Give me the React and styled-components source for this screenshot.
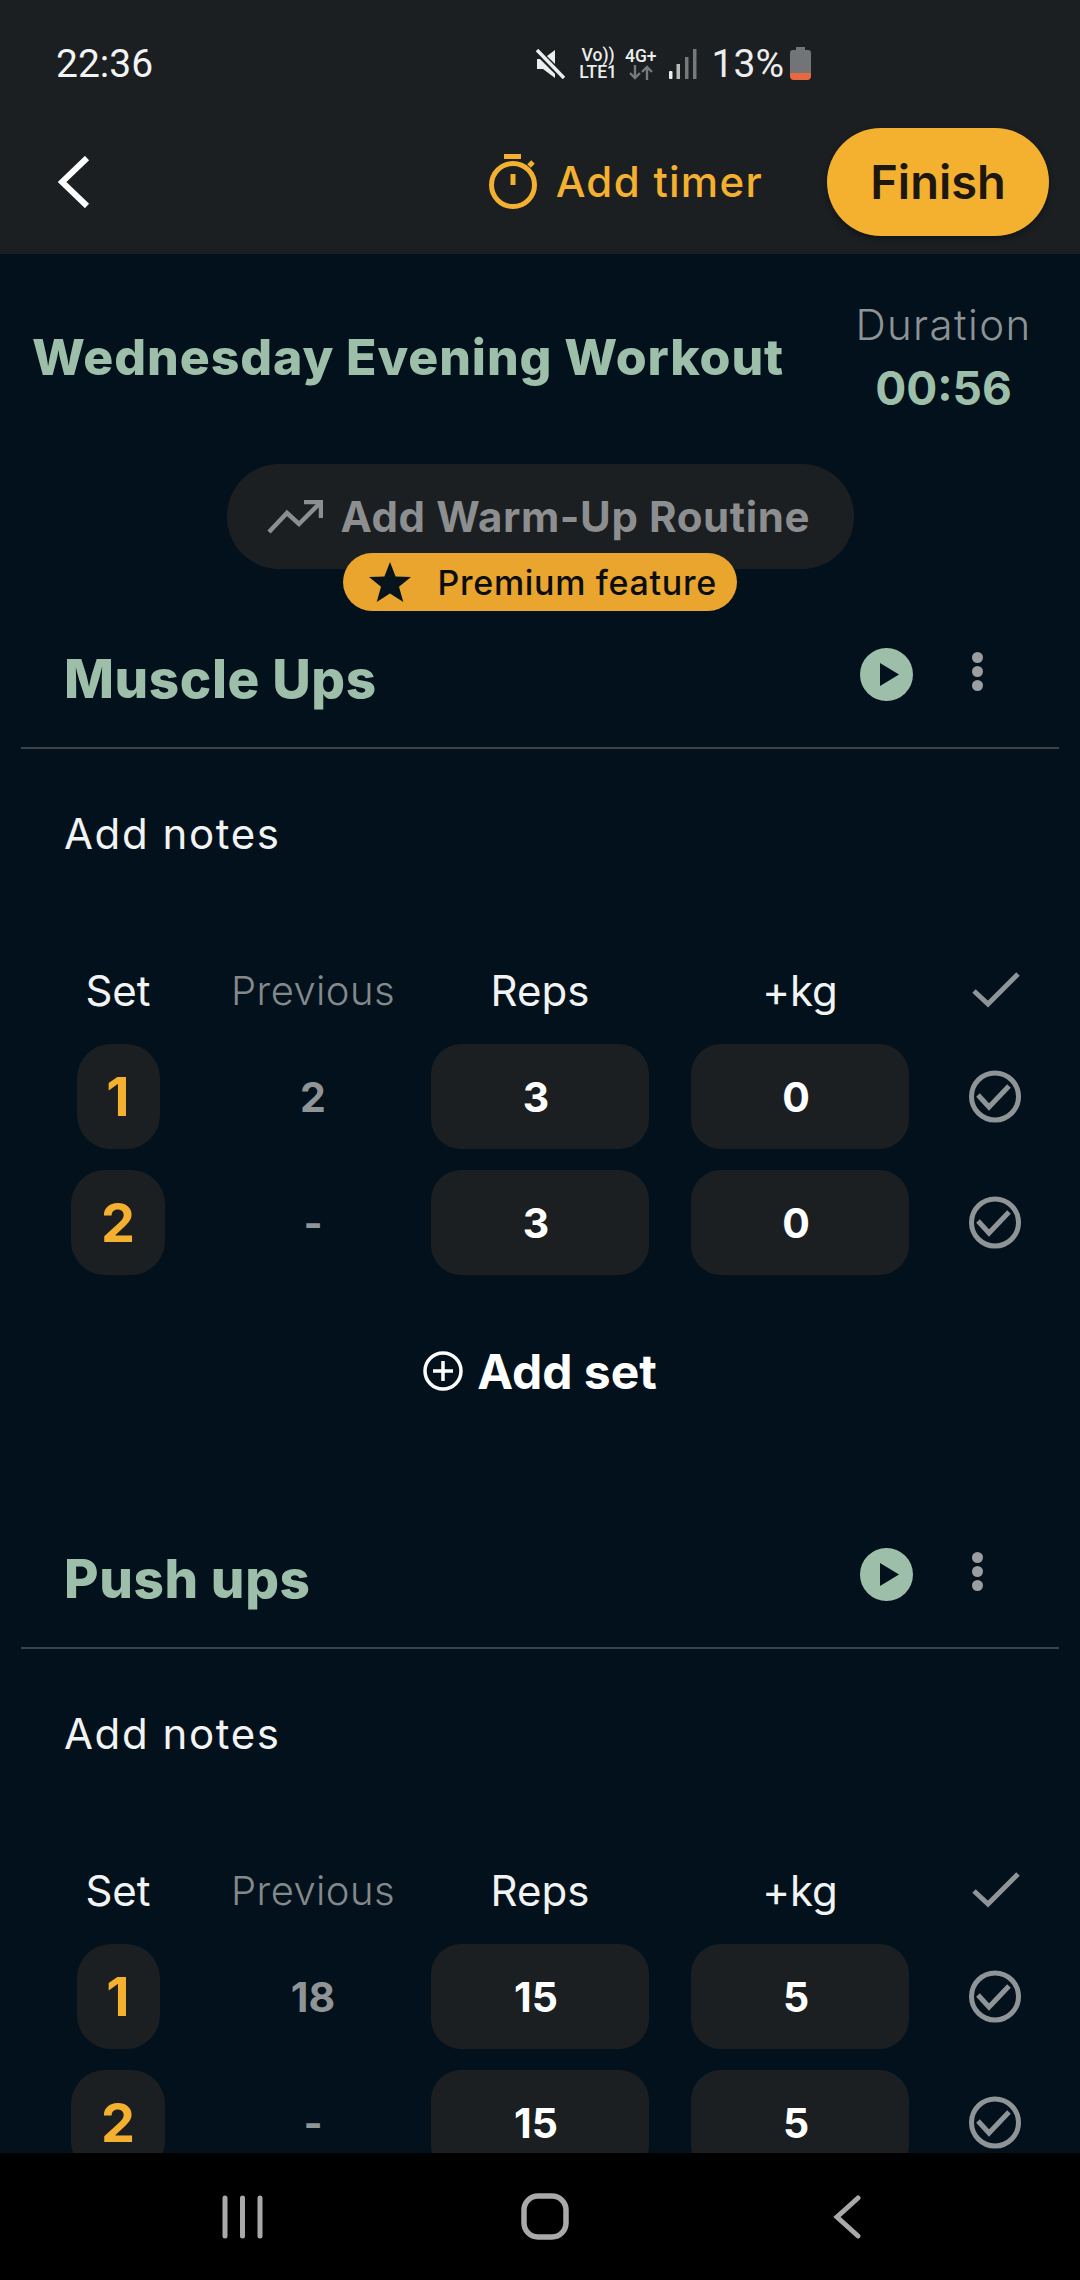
import React from 'react'
import styled, { createGlobalStyle } from 'styled-components'

const GlobalStyle = createGlobalStyle`
  html, body {
    margin: 0;
    padding: 0;
    background: #02111b;
    font-family: Inter, "Noto Sans", sans-serif;
  }
`

const Screen = styled.div`
  width: 1080px;
  height: 2280px;
  display: flex;
  flex-direction: column;
  overflow: hidden;
  background: #02111b;
`

const Header = styled.header`
  height: 254px;
  flex-shrink: 0;
  background: #1b1f21;
  display: flex;
  flex-direction: column;
`

const StatusBar = styled.div`
  height: 127px;
  padding: 0 269px 0 56px;
  display: flex;
  align-items: center;
  justify-content: space-between;
  box-sizing: border-box;
`

const Clock = styled.span`
  font-family: Roboto, sans-serif;
  font-size: 39px;
  color: #f2f3f3;
`

const StatusIcons = styled.div`
  display: flex;
  align-items: center;
`

const NetStack = styled.div`
  display: flex;
  flex-direction: column;
  align-items: center;
  font-family: Roboto, sans-serif;
  font-weight: 500;
  font-size: 17.5px;
  line-height: 17px;
  color: #eceded;
  margin-left: ${p => p.$left}px;
  margin-right: ${p => p.$right}px;
`

const Percent = styled.span`
  font-family: Roboto, sans-serif;
  font-size: 39px;
  color: #eceded;
  margin: 0 6px 0 15px;
`

const Toolbar = styled.div`
  height: 127px;
  margin-top: -9px;
  padding: 0 31px 0 58px;
  display: flex;
  align-items: center;
`

const TimerButton = styled.div`
  margin-left: auto;
  display: flex;
  align-items: center;
  gap: 19px;
  color: #f4b02f;
  font-size: 42px;
  letter-spacing: 1.3px;
  font-weight: 500;
  margin-right: 64px;
`

const FinishButton = styled.div`
  width: 222px;
  height: 108px;
  border-radius: 54px;
  background: #f4b02f;
  color: #1c1710;
  font-size: 47px;
  font-weight: 600;
  display: flex;
  align-items: center;
  justify-content: center;
  box-shadow: 0 3px 6px rgba(0, 0, 0, 0.35);
`

const Main = styled.main`
  flex: 1;
  min-height: 0;
  overflow: hidden;
`

const TitleRow = styled.div`
  padding: 44px 48px 0 32px;
  display: flex;
  align-items: center;
  justify-content: space-between;
`

const WorkoutTitle = styled.h1`
  margin: 0;
  font-size: 50px;
  letter-spacing: 0.9px;
  font-weight: 800;
  white-space: nowrap;
  color: #9dbfa9;
`

const DurationBox = styled.div`
  width: 177px;
  display: flex;
  flex-direction: column;
  align-items: center;
  gap: 9px;
`

const DurationLabel = styled.span`
  font-size: 42px;
  letter-spacing: 1.4px;
  line-height: 54px;
  font-weight: 300;
  color: #8e9396;
`

const DurationValue = styled.span`
  font-size: 46px;
  line-height: 54px;
  font-weight: 700;
  color: #9dbfa9;
`

const WarmUpWrap = styled.div`
  position: relative;
  margin: 49px auto 18px;
  width: 627px;
  height: 147px;
`

const WarmUpPill = styled.div`
  height: 105px;
  border-radius: 52px;
  background: #1b1f21;
  color: #8c8e90;
  font-size: 42px;
  letter-spacing: 0.6px;
  font-weight: 700;
  display: flex;
  align-items: center;
  gap: 18px;
  padding-left: 40px;
  box-sizing: border-box;
`

const PremiumBadge = styled.div`
  position: absolute;
  left: 116px;
  top: 89px;
  width: 394px;
  height: 58px;
  box-sizing: border-box;
  padding-left: 25px;
  border-radius: 29px;
  background: #e9a52d;
  color: #0a0e10;
  font-size: 34px;
  letter-spacing: 0.7px;
  font-weight: 500;
  display: flex;
  align-items: center;
  gap: 26px;
`

const Exercise = styled.section`
  margin-top: ${p => p.$top}px;
`

const ExerciseHead = styled.div`
  height: 100px;
  padding: 0 97px 0 64px;
  display: flex;
  align-items: center;
`

const ExerciseName = styled.h2`
  margin: 0;
  font-size: 53px;
  letter-spacing: 0.6px;
  font-weight: 800;
  color: #9dbfa9;
`

const HeadIcons = styled.div`
  margin-left: auto;
  display: flex;
  align-items: center;
  gap: 59px;
  margin-bottom: 10px;
`

const Dots = styled.div`
  display: flex;
  flex-direction: column;
  gap: 3px;
  margin-bottom: 5px;

  span {
    width: 11px;
    height: 11px;
    border-radius: 50%;
    background: #9a9ea1;
  }
`

const Divider = styled.div`
  height: 2px;
  margin: 18px 21px 0;
  background: #3d4347;
`

const Notes = styled.div`
  margin-top: 55px;
  padding-left: 64px;
  height: 60px;
  line-height: 60px;
  font-size: 42px;
  letter-spacing: 1.6px;
  color: #f2f3f3;
`

const SetGrid = styled.div`
  padding-left: 20px;
  display: grid;
  grid-template-columns: 196px 194px 260px 260px 130px;
  align-items: center;
  justify-items: center;
  margin-top: ${p => p.$top}px;
  height: ${p => p.$height}px;
`

const HeadCell = styled.span`
  font-size: ${p => (p.$muted ? 40 : 42)}px;
  letter-spacing: ${p => (p.$muted ? 0.4 : 0)}px;
  color: ${p => (p.$muted ? '#84898c' : '#f2f3f3')};
  font-weight: ${p => (p.$muted ? 300 : 400)};
`

const SetNumber = styled.div`
  width: ${p => (p.$wide ? 94 : 83)}px;
  height: 105px;
  border-radius: 34px;
  background: #1b1f21;
  color: #f4b02f;
  font-size: 54px;
  font-weight: 700;
  display: flex;
  align-items: center;
  justify-content: center;
`

const Previous = styled.span`
  font-size: 41px;
  font-weight: 700;
  color: #8f9497;
`

const ValueBox = styled.div`
  width: 218px;
  height: 105px;
  box-sizing: border-box;
  padding-right: 8px;
  border-radius: 30px;
  background: #1b1f21;
  color: #fff;
  font-size: 41px;
  font-weight: 700;
  display: flex;
  align-items: center;
  justify-content: center;
`

const AddSet = styled.div`
  margin-top: 66px;
  height: 60px;
  display: flex;
  align-items: center;
  justify-content: center;
  gap: 14px;
  color: #fff;
  font-size: 48px;
  font-weight: 700;
`

const NavBar = styled.nav`
  height: 127px;
  flex-shrink: 0;
  background: #000;
  box-sizing: border-box;
  padding-left: 222px;
  display: grid;
  grid-template-columns: 299px 312px auto;
  align-items: center;
`

const MuteIcon = () => (
  <svg width="30" height="30" viewBox="0 0 30 30">
    <path d="M2 10h6L20 1v28L8 20H2z" fill="#eceded" />
    <path d="M1 1l28 28" stroke="#1b1f21" strokeWidth="7" />
    <path d="M2 1l27 28" stroke="#eceded" strokeWidth="3.5" />
  </svg>
)

const ArrowsIcon = () => (
  <svg width="24" height="15" viewBox="0 0 24 15" fill="none" stroke="#77797b" strokeWidth="2.4">
    <path d="M6 0v13M1 8l5 5 5-5M18 15V2M13 7l5-5 5 5" />
  </svg>
)

const SignalIcon = () => (
  <svg width="28" height="30" viewBox="0 0 28 30">
    <rect x="0" y="22" width="3.5" height="8" rx="1" fill="#eceded" />
    <rect x="7.500" y="15" width="3.500" height="15" fill="#b9baba" />
    <rect x="16" y="8" width="3.500" height="22" fill="#77797b" />
    <rect x="24" y="0" width="3.500" height="30" fill="#77797b" />
  </svg>
)

const BatteryIcon = () => (
  <svg width="21" height="33" viewBox="0 0 21 33">
    <path d="M6 0h9v3h3a3 3 0 0 1 3 3v20H0V6a3 3 0 0 1 3-3h3z" fill="#727476" />
    <path d="M0 26h21v3a4 4 0 0 1-4 4H4a4 4 0 0 1-4-4z" fill="#e8683f" />
  </svg>
)

const BackIcon = () => (
  <svg width="32" height="52" viewBox="0 0 32 52" fill="none" stroke="#fff" strokeWidth="6">
    <path d="M29 2L4 26l25 24" />
  </svg>
)

const TimerIcon = () => (
  <svg width="48" height="56" viewBox="0 0 48 56" fill="none" stroke="#f4b02f" strokeWidth="5">
    <path d="M15 2.5h17" strokeWidth="5" />
    <circle cx="24" cy="31" r="21.5" />
    <path d="M24 20v11" />
    <path d="M40 12l4-4" />
  </svg>
)

const TrendIcon = () => (
  <svg width="56" height="34" viewBox="0 0 56 34" fill="none" stroke="#8c8e90" strokeWidth="4.5">
    <path d="M2 32l18-19 12 11L53 3" />
    <path d="M37 2h17v16" />
  </svg>
)

const StarIcon = () => (
  <svg width="44" height="40" viewBox="0 0 44 40">
    <path d="M22 0l5.6 14.6L43 15l-12 9.8 4.3 15.2L22 31.400 8.700 40 13 24.800 1 15l15.400-.4z" fill="#08141c" />
  </svg>
)

const PlayIcon = () => (
  <svg width="53" height="53" viewBox="0 0 53 53">
    <circle cx="26.500" cy="26.500" r="26.500" fill="#9dbfa9" />
    <path d="M20 15l19 11.500L20 38z" fill="#02111b" />
  </svg>
)

const HeaderCheck = () => (
  <svg width="52" height="40" viewBox="0 0 52 40" fill="none" stroke="#8f9497" strokeWidth="5">
    <path d="M5 21l14 13L49 4" />
  </svg>
)

const CircleCheck = () => (
  <svg width="52" height="53" viewBox="0 0 52 53" fill="none" stroke="#8f9497" strokeWidth="5">
    <circle cx="26" cy="26.500" r="23.500" />
    <path d="M9 25l11 12 20-21" />
  </svg>
)

const PlusCircle = () => (
  <svg width="40" height="40" viewBox="0 0 40 40" fill="none" stroke="#fff" strokeWidth="3.500">
    <circle cx="20" cy="20" r="18" />
    <path d="M20 10v20M10 20h20" />
  </svg>
)

const NavMenu = () => (
  <svg width="41" height="44" viewBox="0 0 41 44" stroke="#a9a9a9" strokeWidth="5" strokeLinecap="round">
    <path d="M3 3v38M20.500 3v38M38 3v38" />
  </svg>
)

const NavHome = () => (
  <svg width="48" height="47" viewBox="0 0 48 47" fill="none" stroke="#a9a9a9" strokeWidth="5.500">
    <rect x="3" y="3" width="42" height="41" rx="14" />
  </svg>
)

const NavBack = () => (
  <svg width="28" height="44" viewBox="0 0 28 44" fill="none" stroke="#a9a9a9" strokeWidth="5" strokeLinecap="round">
    <path d="M25 3L4 22l21 19" />
  </svg>
)

// the second card runs under the nav bar, so it has no add button on screen
const exercises = [
  { name: 'Muscle Ups', top: 0, addSet: true, sets: [
    { previous: '2', reps: '3', kg: '0' },
    { previous: '-', reps: '3', kg: '0' },
  ] },
  { name: 'Push ups', top: 128, addSet: false, sets: [
    { previous: '18', reps: '15', kg: '5' },
    { previous: '-', reps: '15', kg: '5' },
  ] },
]

const App = () => {
  return (
    <Screen>
      <GlobalStyle />
      <Header>
        <StatusBar>
          <Clock>22:36</Clock>
          <StatusIcons>
            <MuteIcon />
            <NetStack $left={14} $right={0}><span>Vo))</span><span>LTE1</span></NetStack>
            <NetStack $left={8} $right={12}><span>4G+</span><ArrowsIcon /></NetStack>
            <SignalIcon />
            <Percent>13%</Percent>
            <BatteryIcon />
          </StatusIcons>
        </StatusBar>
        <Toolbar>
          <BackIcon />
          <TimerButton><TimerIcon />Add timer</TimerButton>
          <FinishButton>Finish</FinishButton>
        </Toolbar>
      </Header>
      <Main>
        <TitleRow>
          <WorkoutTitle>Wednesday Evening Workout</WorkoutTitle>
          <DurationBox>
            <DurationLabel>Duration</DurationLabel>
            <DurationValue>00:56</DurationValue>
          </DurationBox>
        </TitleRow>
        <WarmUpWrap>
          <WarmUpPill><TrendIcon />Add Warm-Up Routine</WarmUpPill>
          <PremiumBadge><StarIcon />Premium feature</PremiumBadge>
        </WarmUpWrap>
        {exercises.map(ex => (
          <Exercise key={ex.name} $top={ex.top}>
            <ExerciseHead>
              <ExerciseName>{ex.name}</ExerciseName>
              <HeadIcons>
                <PlayIcon />
                <Dots><span /><span /><span /></Dots>
              </HeadIcons>
            </ExerciseHead>
            <Divider />
            <Notes>Add notes</Notes>
            <SetGrid $top={96} $height={60}>
              <HeadCell>Set</HeadCell>
              <HeadCell $muted>Previous</HeadCell>
              <HeadCell>Reps</HeadCell>
              <HeadCell>+kg</HeadCell>
              <HeaderCheck />
            </SetGrid>
            {ex.sets.map((set, i) => (
              <SetGrid key={i} $top={i === 0 ? 24 : 21} $height={105}>
                <SetNumber $wide={i === 1}>{i + 1}</SetNumber>
                <Previous>{set.previous}</Previous>
                <ValueBox>{set.reps}</ValueBox>
                <ValueBox>{set.kg}</ValueBox>
                <CircleCheck />
              </SetGrid>
            ))}
            {ex.addSet && <AddSet><PlusCircle />Add set</AddSet>}
          </Exercise>
        ))}
      </Main>
      <NavBar>
        <NavMenu />
        <NavHome />
        <NavBack />
      </NavBar>
    </Screen>
  )
}

export default App
